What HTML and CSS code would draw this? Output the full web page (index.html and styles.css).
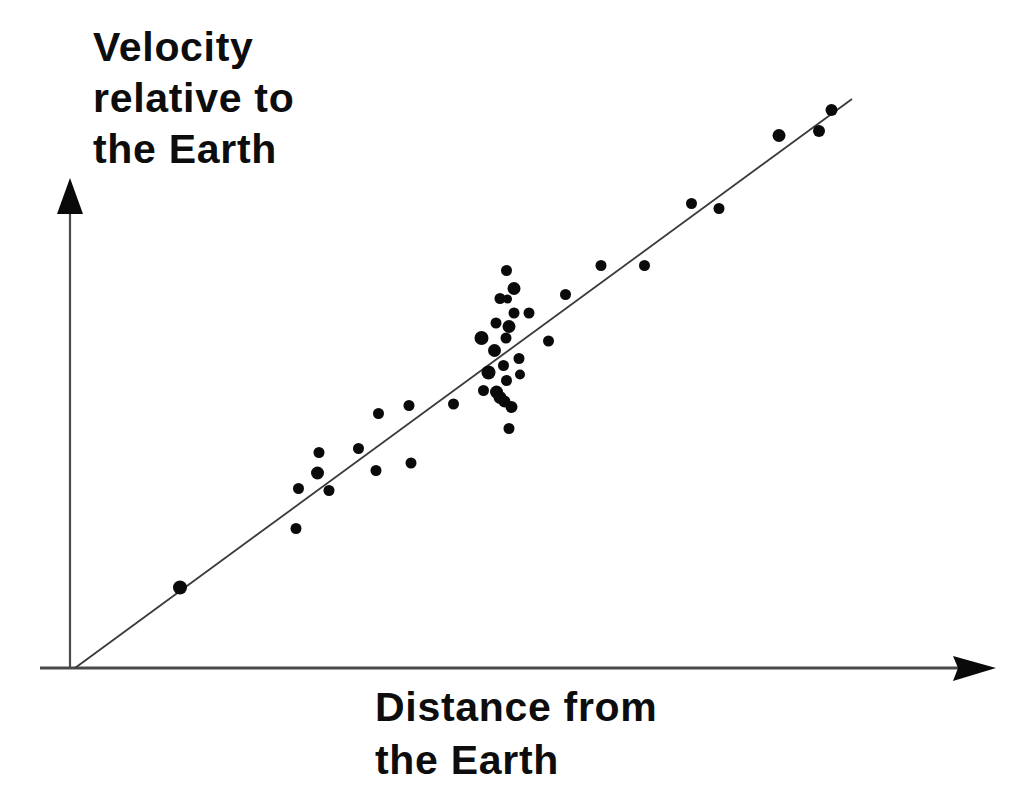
FILE: index.html
```html
<!DOCTYPE html>
<html lang="en">
<head>
<meta charset="utf-8">
<title>Velocity vs Distance</title>
<link rel="stylesheet" href="styles.css">
</head>
<body>
<div class="figure">
  <svg class="chart" viewBox="0 0 1029 802" xmlns="http://www.w3.org/2000/svg">
    <g class="axes">
      <line class="axis-y" x1="70" y1="210" x2="70" y2="668"/>
      <polygon class="arrow" points="70,178 83,214 57,214"/>
      <line class="axis-x" x1="40" y1="668" x2="958" y2="668"/>
      <polygon class="arrow" points="996,668 953,656 958,668 953,681"/>
    </g>
    <line class="fit" x1="75" y1="668" x2="852" y2="99"/>
    <g class="dots">
      <circle cx="180" cy="587.5" r="7"/>
      <circle cx="296" cy="528.5" r="5.5"/>
      <circle cx="298.5" cy="488.5" r="5.5"/>
      <circle cx="319" cy="452.5" r="5.5"/>
      <circle cx="317.5" cy="473" r="6.5"/>
      <circle cx="329" cy="490.5" r="5.5"/>
      <circle cx="358.5" cy="448.5" r="5.5"/>
      <circle cx="376" cy="470.5" r="5.5"/>
      <circle cx="378.5" cy="413.5" r="5.5"/>
      <circle cx="409" cy="405.5" r="5.5"/>
      <circle cx="411" cy="463" r="5.5"/>
      <circle cx="453.5" cy="404" r="5.5"/>
      <circle cx="506.5" cy="270.5" r="5.5"/>
      <circle cx="514" cy="288.5" r="6.5"/>
      <circle cx="500" cy="298.5" r="5.5"/>
      <circle cx="507.5" cy="299" r="4.5"/>
      <circle cx="565.5" cy="294.5" r="5.5"/>
      <circle cx="514" cy="313" r="5.5"/>
      <circle cx="529" cy="313" r="5.5"/>
      <circle cx="496" cy="323" r="5.5"/>
      <circle cx="509" cy="326.5" r="6.5"/>
      <circle cx="481.5" cy="338" r="7"/>
      <circle cx="506" cy="338" r="5.5"/>
      <circle cx="548.5" cy="341" r="5.5"/>
      <circle cx="494.5" cy="350.5" r="6.5"/>
      <circle cx="519" cy="358.5" r="5.5"/>
      <circle cx="503.5" cy="365.5" r="5.5"/>
      <circle cx="488.5" cy="372.5" r="7"/>
      <circle cx="520" cy="374.5" r="5"/>
      <circle cx="506.5" cy="380.5" r="5.5"/>
      <circle cx="483.5" cy="390.5" r="5.5"/>
      <circle cx="496.5" cy="392" r="6.5"/>
      <circle cx="500" cy="397.5" r="6.5"/>
      <circle cx="504.5" cy="401.5" r="6"/>
      <circle cx="511.5" cy="407" r="6"/>
      <circle cx="509" cy="428.5" r="5.5"/>
      <circle cx="601" cy="265.5" r="5.5"/>
      <circle cx="644.5" cy="265.5" r="5.5"/>
      <circle cx="691.5" cy="203.5" r="5.5"/>
      <circle cx="719" cy="208.5" r="5.5"/>
      <circle cx="779" cy="135.5" r="6.5"/>
      <circle cx="819" cy="131" r="6"/>
      <circle cx="831.5" cy="110" r="6"/>
    </g>
  </svg>
  <div class="label y-label">Velocity<br>relative to<br>the Earth</div>
  <div class="label x-label">Distance from<br>the Earth</div>
</div>
</body>
</html>
```

FILE: styles.css
```css
html, body {
  margin: 0;
  padding: 0;
  background: #ffffff;
}

.figure {
  display: grid;
  width: 1029px;
  height: 802px;
  background: #ffffff;
  overflow: hidden;
}

.figure > * {
  grid-area: 1 / 1;
}

.chart {
  display: block;
  width: 1029px;
  height: 802px;
}

.axis-y {
  stroke: #4a4a4a;
  stroke-width: 2.2;
}

.axis-x {
  stroke: #4a4a4a;
  stroke-width: 3;
}

.arrow {
  fill: #0a0a0a;
}

.fit {
  stroke: #3a3a3a;
  stroke-width: 1.8;
}

.dots circle {
  fill: #0a0a0a;
}

.label {
  align-self: start;
  justify-self: start;
  font-family: "Liberation Sans", Arial, Helvetica, sans-serif;
  font-weight: 700;
  font-size: 41px;
  letter-spacing: 0.7px;
  color: #0d0d0d;
  white-space: nowrap;
}

.y-label {
  line-height: 51px;
  margin: 22px 0 0 93px;
}

.x-label {
  line-height: 53px;
  margin: 681px 0 0 375px;
}
```
